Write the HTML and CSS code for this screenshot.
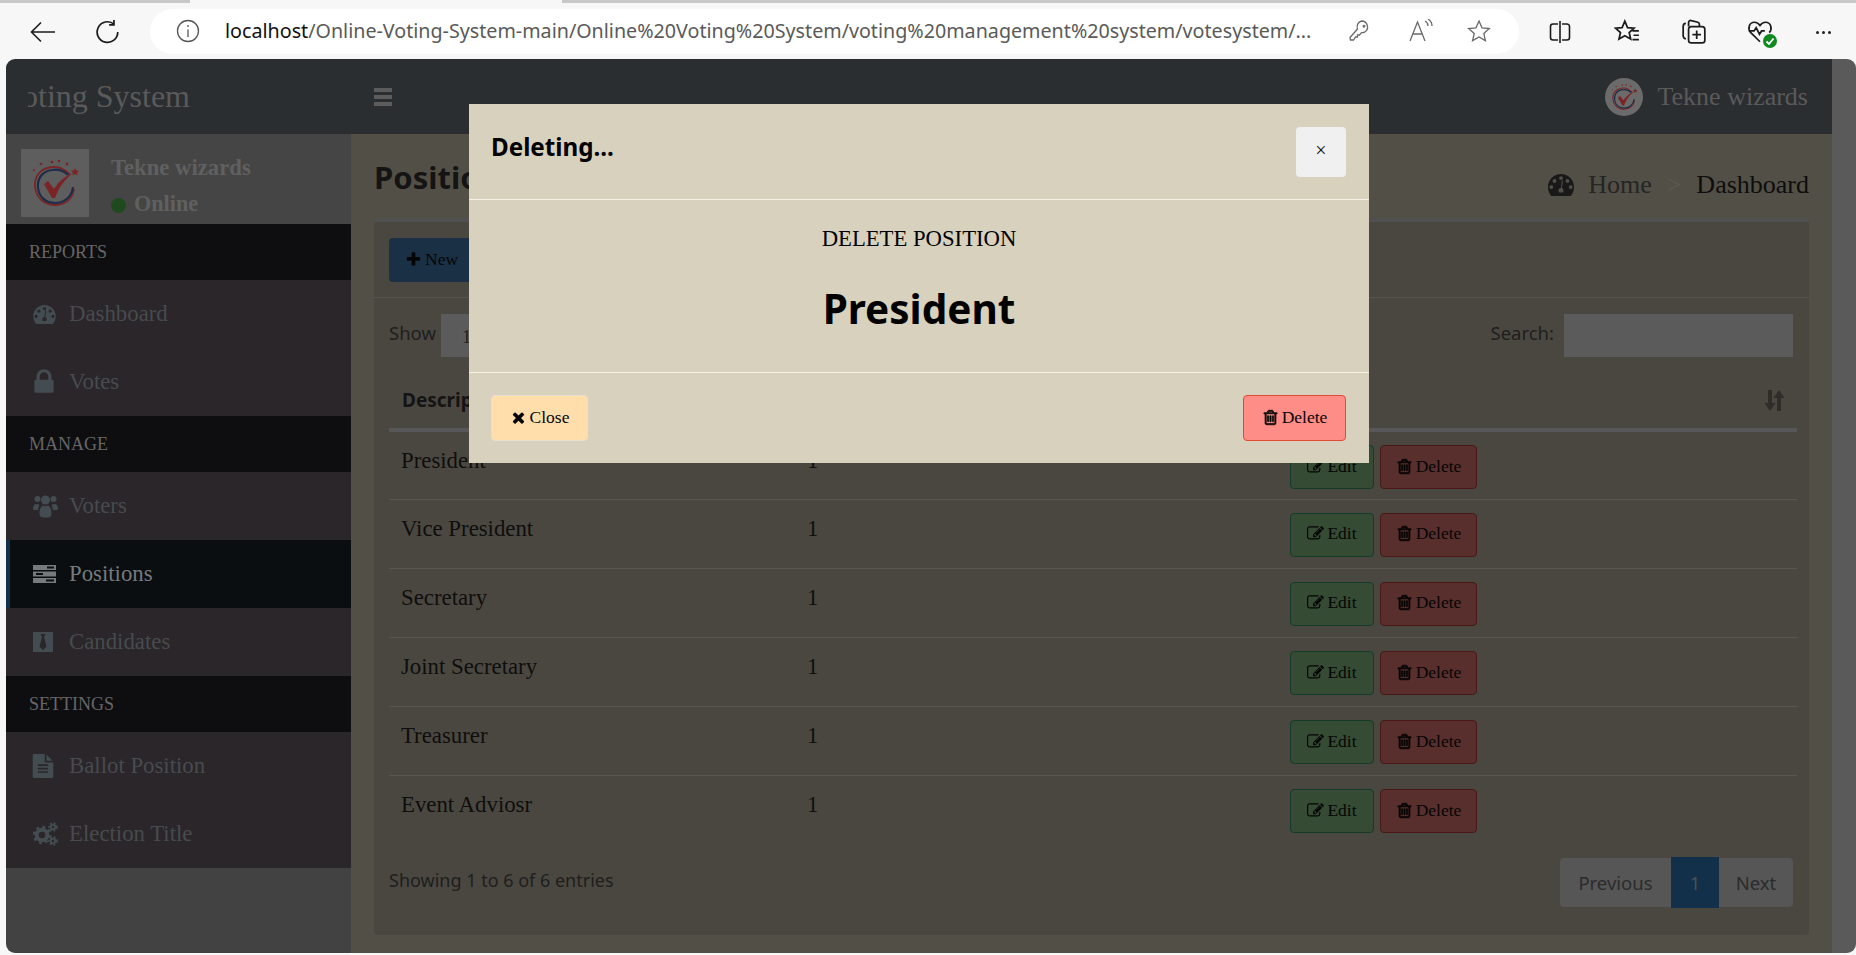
FILE: index.html
```html
<!DOCTYPE html>
<html lang="en">
<head>
<meta charset="utf-8">
<title>Positions</title>
<link rel="stylesheet" href="styles.css">
</head>
<body>
<svg class="sprite" xmlns="http://www.w3.org/2000/svg">
  <symbol id="i-trash" viewBox="0 0 1792 1792"><path stroke="currentColor" stroke-width="70" d="M704 736v576q0 14-9 23t-23 9h-64q-14 0-23-9t-9-23v-576q0-14 9-23t23-9h64q14 0 23 9t9 23zm256 0v576q0 14-9 23t-23 9h-64q-14 0-23-9t-9-23v-576q0-14 9-23t23-9h64q14 0 23 9t9 23zm256 0v576q0 14-9 23t-23 9h-64q-14 0-23-9t-9-23v-576q0-14 9-23t23-9h64q14 0 23 9t9 23zm128 724v-948h-896v948q0 22 7 40.5t14.5 27 10.5 8.5h832q3 0 10.5-8.5t14.5-27 7-40.5zm-672-1076h448l-48-117q-7-9-17-11h-317q-10 2-17 11zm928 32v64q0 14-9 23t-23 9h-96v948q0 83-47 143.5t-113 60.5h-832q-66 0-113-58.5t-47-141.5v-952h-96q-14 0-23-9t-9-23v-64q0-14 9-23t23-9h309l70-167q15-37 54-63t79-26h320q40 0 79 26t54 63l70 167h309q14 0 23 9t9 23z"/></symbol>
  <symbol id="i-plus" viewBox="0 0 1792 1792"><path d="M1600 736v192q0 40-28 68t-68 28h-416v416q0 40-28 68t-68 28h-192q-40 0-68-28t-28-68v-416h-416q-40 0-68-28t-28-68v-192q0-40 28-68t68-28h416v-416q0-40 28-68t68-28h192q40 0 68 28t28 68v416h416q40 0 68 28t28 68z"/></symbol>
  <symbol id="i-times" viewBox="0 0 1792 1792"><path d="M1490 1322q0 40-28 68l-136 136q-28 28-68 28t-68-28l-294-294-294 294q-28 28-68 28t-68-28l-136-136q-28-28-28-68t28-68l294-294-294-294q-28-28-28-68t28-68l136-136q28-28 68-28t68 28l294 294 294-294q28-28 68-28t68 28l136 136q28 28 28 68t-28 68l-294 294 294 294q28 28 28 68z"/></symbol>
  <symbol id="i-lock" viewBox="0 0 1792 1792"><path d="M640 768h512v-192q0-106-75-181t-181-75-181 75-75 181v192zm832 96v576q0 40-28 68t-68 28h-960q-40 0-68-28t-28-68v-576q0-40 28-68t68-28h32v-192q0-184 132-316t316-132 316 132 132 316v192h32q40 0 68 28t28 68z"/></symbol>
  <symbol id="i-edit" viewBox="0 0 1792 1792"><path d="M888 1184l116-116-152-152-116 116v56h96v96h56zm440-720q-16-16-33 1l-350 350q-17 17-1 33t33-1l350-350q17-17 1-33zm80 594v190q0 119-84.5 203.5t-203.5 84.5h-832q-119 0-203.5-84.5t-84.5-203.5v-832q0-119 84.5-203.5t203.5-84.5h832q63 0 117 25 15 7 18 23 3 17-9 29l-49 49q-14 14-32 8-23-6-45-6h-832q-66 0-113 47t-47 113v832q0 66 47 113t113 47h832q66 0 113-47t47-113v-126q0-13 9-22l64-64q15-15 35-7t20 29zm-96-738l288 288-672 672h-288v-288zm444 132l-92 92-288-288 92-92q28-28 68-28t68 28l152 152q28 28 28 68t-28 68z"/></symbol>
  <symbol id="i-file" viewBox="0 0 1792 1792"><path d="M1596 476q14 14 28 36h-472v-472q22 14 36 28zm-476 164h544v1056q0 40-28 68t-68 28h-1344q-40 0-68-28t-28-68v-1600q0-40 28-68t68-28h800v544q0 40 28 68t68 28zm160 736v-64q0-14-9-23t-23-9h-704q-14 0-23 9t-9 23v64q0 14 9 23t23 9h704q14 0 23-9t9-23zm0-256v-64q0-14-9-23t-23-9h-704q-14 0-23 9t-9 23v64q0 14 9 23t23 9h704q14 0 23-9t9-23zm0-256v-64q0-14-9-23t-23-9h-704q-14 0-23 9t-9 23v64q0 14 9 23t23 9h704q14 0 23-9t9-23z"/></symbol>
  <symbol id="i-gauge" viewBox="0 0 26 22"><path fill-rule="evenodd" d="M13 0C5.800 0 0 5.800 0 13c0 3.300 1.100 6.300 3 8.700.4.200.8.300 1.200.300h17.600c.4 0 .8-.1 1.200-.3 1.900-2.400 3-5.400 3-8.700C26 5.800 20.200 0 13 0zM13 2.200a1.900 1.900 0 1 1 0 3.800 1.900 1.900 0 0 1 0-3.800zM6.500 5.100a1.900 1.900 0 1 1 0 3.800 1.900 1.900 0 0 1 0-3.800zM3.300 11.200a1.900 1.900 0 1 1 0 3.800 1.900 1.900 0 0 1 0-3.800zM19.500 5.100a1.900 1.900 0 1 1 0 3.800 1.900 1.900 0 0 1 0-3.800zM22.700 11.200a1.900 1.900 0 1 1 0 3.800 1.900 1.900 0 0 1 0-3.800zM14.900 6.800l-1 7.300c1 .4 1.700 1.300 1.700 2.500 0 .7-.3 1.400-.8 1.900H11.200c-.5-.5-.8-1.200-.8-1.900 0-1.400 1.100-2.500 2.500-2.600l1-7.400c.1-.6 1.100-.5 1 .2z"/></symbol>
  <symbol id="i-users" viewBox="0 0 25 24"><circle cx="4.500" cy="5" r="3"/><circle cx="20.500" cy="5" r="3"/><circle cx="12.500" cy="6" r="4.500"/><path d="M0 15c0-3 1-5 3.500-5 1 0 2 .6 3 1-.8 1.500-1.300 3-1.300 5H1.500C.5 16 0 15.800 0 15zM25 15c0-3-1-5-3.500-5-1 0-2 .6-3 1 .8 1.500 1.300 3 1.300 5h3.700c1 0 1.500-.2 1.500-1z"/><path d="M6.500 20c0-5 1.300-8 4-8.500.6.500 1.200.8 2 .8s1.400-.3 2-.8c2.700.5 4 3.500 4 8.500 0 2.500-1.500 3.500-3.500 3.500h-5c-2 0-3.500-1-3.500-3.500z"/></symbol>
  <symbol id="i-tasks" viewBox="0 0 23 18"><path fill-rule="evenodd" d="M0 0h23v5H0zM14 1.500v2h7v-2zM0 6.500h23v5H0zM3 8v2h7V8zM0 13h23v5H0zM13 14.500v2h8v-2z"/></symbol>
  <symbol id="i-tie" viewBox="0 0 20 20"><path fill-rule="evenodd" d="M0 0h20v20H0zM7.500 2l1.500 3-2.500 9.500L10 18l3.500-3.500L11 5l1.500-3z"/></symbol>
  <symbol id="i-cogs" viewBox="0 0 25 24">
    <circle cx="9" cy="13" r="5.300" fill="none" stroke="currentColor" stroke-width="4"/>
    <circle cx="9" cy="13" r="8" fill="none" stroke="currentColor" stroke-width="2.500" stroke-dasharray="3 3.300"/>
    <circle cx="20" cy="5" r="2.300" fill="none" stroke="currentColor" stroke-width="2"/>
    <circle cx="20" cy="5" r="4" fill="none" stroke="currentColor" stroke-width="1.600" stroke-dasharray="2 1.800"/>
    <circle cx="20" cy="19" r="2.300" fill="none" stroke="currentColor" stroke-width="2"/>
    <circle cx="20" cy="19" r="4" fill="none" stroke="currentColor" stroke-width="1.600" stroke-dasharray="2 1.800"/>
  </symbol>
  <symbol id="i-logo" viewBox="0 0 68 68">
    <g fill="#7a2426"><circle cx="31" cy="13" r="1.300"/><circle cx="38" cy="12" r="1.300"/><circle cx="20" cy="15" r="1.300"/><circle cx="46" cy="15" r="1.400"/><circle cx="13" cy="21" r="1"/><path d="M54 19l1.200 2.500 2.800.3-2 1.900.5 2.800-2.500-1.400-2.500 1.400.5-2.800-2-1.900 2.800-.3z"/></g>
    <path d="M49 26C44 20 38 17 31 18 20 19 13 27 14 38c1 10 9 18 20 18 11 0 18-7 19-16" fill="none" stroke="#7a2426" stroke-width="1.800"/>
    <path d="M47 26C43 22 37 20 31 21 21 22 16 30 17 39c1 9 8 15 17 15 9 0 17-6 18-16" fill="none" stroke="#1d2c48" stroke-width="2.200"/>
    <path d="M23 35l4-3 6 8C38 32 44 27 52 24 44 30 38 38 34 49h-3z" fill="#7a2426"/>
  </symbol>
  <symbol id="i-sort" viewBox="0 0 21 21"><path d="M4 0h4v13h3.500L6 21 .5 13H4zM13 8V21h4V8h3.500L15 0 9.500 8z"/></symbol>
</svg>

<div class="tabstrip"><span class="tab-gray tab-left"></span><span class="tab-active"></span><span class="tab-gray tab-right"></span></div>

<header class="toolbar">
  <svg class="tool tool-back" viewBox="0 0 26 22"><path d="M25 11H2M11 1.500 1.500 11l9.500 9.500"/></svg>
  <svg class="tool tool-reload" viewBox="0 0 24 24"><path d="M21 12a9.500 9.500 0 1 1-3.500-7.300M17.500 1v4.500H13" /></svg>
  <div class="address">
    <svg class="addr-info" viewBox="0 0 24 24"><circle cx="12" cy="12" r="10.500"/><path d="M12 10.500V18M12 6v2"/></svg>
    <div class="url"><span class="url-host">localhost</span>/Online-Voting-System-main/Online%20Voting%20System/voting%20management%20system/votesystem/...</div>
    <svg class="addr-icon addr-key" viewBox="0 0 24 24"><path d="M14.500 2a6 6 0 0 1 3 11.200c-1 .5-2 .6-3 .4l-2 2.400h-2v2h-2l-2 3H3.500l-.5-2.500 7.500-8.500a6 6 0 0 1 4-8zM17 6.500a.8.800 0 1 1-.01 0z"/></svg>
    <svg class="addr-icon addr-read" viewBox="0 0 26 24"><path d="M2 22 9.500 3l7.500 19M5 15h9M17 2c2 1 3 2.500 3 5M20 0c2.500 1.500 4 3.500 4 7"/></svg>
    <svg class="addr-icon addr-star" viewBox="0 0 24 24"><path d="M12 2l3 6.800 7.300.7-5.500 4.900 1.600 7.200L12 18l-6.400 3.600 1.600-7.200L1.700 9.500 9 8.800z"/></svg>
  </div>
  <svg class="tool tool-split" viewBox="0 0 24 24"><path d="M10 4H5a2.500 2.500 0 0 0-2.500 2.500v11A2.500 2.500 0 0 0 5 20h5M14 4h5a2.500 2.500 0 0 1 2.500 2.500v11A2.500 2.500 0 0 1 19 20h-5M12 1v22"/></svg>
  <svg class="tool tool-fav" viewBox="0 0 24 24"><path d="M10 2l2.500 6 6 .5-4.500 4 1.400 6L10 15.500 4.600 18.500 6 12.500l-4.500-4 6-.5zM17 11h6M18 15h5M17 19h6"/></svg>
  <svg class="tool tool-coll" viewBox="0 0 24 24"><path d="M7 7V3.500C7 2 8 1 9.500 1.500l6 1.500c1 .3 1.500 1 1.500 2v2M4.500 18.500c-1.500-.5-2.500-1.500-2.500-3V7c0-2 1-3 2.500-3"/><rect x="7" y="7" width="15" height="15" rx="2.500"/><path d="M14.500 10.500v8M10.500 14.500h8"/></svg>
  <span class="tool-heart">
    <svg class="tool" viewBox="0 0 24 24"><path d="M12 21 3.500 12.500C.5 9.500 1.500 3 7 3c2.500 0 4 1.500 5 3 1-1.500 2.500-3 5-3 5.500 0 6.500 6.500 3.500 9.500M1.500 11h5l2-3 3 6 2-3h3"/></svg>
    <span class="heart-badge"><svg viewBox="0 0 14 14"><path d="M3.500 7.500 6 10l4.500-5.500"/></svg></span>
  </span>
  <span class="tool-dots"><i></i><i></i><i></i></span>
</header>

<div class="page">
  <div class="app">
    <div class="topbar">
      <div class="brand"><span class="brand-clip"><span>Online Voting System</span></span></div>
      <div class="hamburger"><i></i><i></i><i></i></div>
      <div class="top-user">
        <span class="top-avatar"><svg><use href="#i-logo"/></svg></span>
        <span>Tekne wizards</span>
      </div>
    </div>
    <div class="workspace">
      <aside class="sidebar">
        <div class="user-panel">
          <span class="user-avatar"><svg><use href="#i-logo"/></svg></span>
          <div class="user-info">
            <div>Tekne wizards</div>
            <div class="user-status"><span class="status-dot"></span>Online</div>
          </div>
        </div>
        <div class="nav-head">REPORTS</div>
        <a class="nav-item"><svg class="nav-icon ni-gauge"><use href="#i-gauge"/></svg>Dashboard</a>
        <a class="nav-item"><svg class="nav-icon ni-lock"><use href="#i-lock"/></svg>Votes</a>
        <div class="nav-head">MANAGE</div>
        <a class="nav-item"><svg class="nav-icon ni-users"><use href="#i-users"/></svg>Voters</a>
        <a class="nav-item nav-active"><svg class="nav-icon ni-tasks"><use href="#i-tasks"/></svg>Positions</a>
        <a class="nav-item"><svg class="nav-icon ni-tie"><use href="#i-tie"/></svg>Candidates</a>
        <div class="nav-head">SETTINGS</div>
        <a class="nav-item"><svg class="nav-icon ni-file"><use href="#i-file"/></svg>Ballot Position</a>
        <a class="nav-item"><svg class="nav-icon ni-cogs"><use href="#i-cogs"/></svg>Election Title</a>
      </aside>
      <main class="content">
        <div class="content-head">
          <h1 class="page-title">Positions</h1>
          <div class="crumbs">
            <svg class="crumb-icon"><use href="#i-gauge"/></svg>
            <span class="crumb-home">Home</span>
            <span class="crumb-sep">&gt;</span>
            <span class="crumb-now">Dashboard</span>
          </div>
        </div>
        <section class="box">
          <div class="box-head">
            <button class="btn btn-new"><svg class="btn-icon"><use href="#i-plus"/></svg>New</button>
          </div>
          <div class="box-body">
            <div class="dt-top">
              <div class="dt-length">Show<span class="dt-select">10</span></div>
              <div class="dt-search">Search:<span class="dt-input"></span></div>
            </div>
            <table class="dt">
              <thead>
                <tr>
                  <th class="col-a">Description</th>
                  <th class="col-b">Maximum Vote</th>
                  <th class="col-c">Tools<svg class="sort-icon"><use href="#i-sort"/></svg></th>
                </tr>
              </thead>
              <tbody>
                <tr><td>President</td><td>1</td><td><div class="tools"><button class="btn btn-edit"><svg class="btn-icon"><use href="#i-edit"/></svg>Edit</button><button class="btn btn-del"><svg class="btn-icon"><use href="#i-trash"/></svg>Delete</button></div></td></tr>
                <tr><td>Vice President</td><td>1</td><td><div class="tools"><button class="btn btn-edit"><svg class="btn-icon"><use href="#i-edit"/></svg>Edit</button><button class="btn btn-del"><svg class="btn-icon"><use href="#i-trash"/></svg>Delete</button></div></td></tr>
                <tr><td>Secretary</td><td>1</td><td><div class="tools"><button class="btn btn-edit"><svg class="btn-icon"><use href="#i-edit"/></svg>Edit</button><button class="btn btn-del"><svg class="btn-icon"><use href="#i-trash"/></svg>Delete</button></div></td></tr>
                <tr><td>Joint Secretary</td><td>1</td><td><div class="tools"><button class="btn btn-edit"><svg class="btn-icon"><use href="#i-edit"/></svg>Edit</button><button class="btn btn-del"><svg class="btn-icon"><use href="#i-trash"/></svg>Delete</button></div></td></tr>
                <tr><td>Treasurer</td><td>1</td><td><div class="tools"><button class="btn btn-edit"><svg class="btn-icon"><use href="#i-edit"/></svg>Edit</button><button class="btn btn-del"><svg class="btn-icon"><use href="#i-trash"/></svg>Delete</button></div></td></tr>
                <tr><td>Event Adviosr</td><td>1</td><td><div class="tools"><button class="btn btn-edit"><svg class="btn-icon"><use href="#i-edit"/></svg>Edit</button><button class="btn btn-del"><svg class="btn-icon"><use href="#i-trash"/></svg>Delete</button></div></td></tr>
              </tbody>
            </table>
            <div class="dt-bottom">
              <div class="dt-info">Showing 1 to 6 of 6 entries</div>
              <div class="pager"><span class="pg pg-prev">Previous</span><span class="pg pg-cur">1</span><span class="pg pg-next">Next</span></div>
            </div>
          </div>
        </section>
      </main>
    </div>
  </div>
  <div class="scrollbar"></div>

  <div class="modal">
    <div class="modal-head">
      <h4 class="modal-title">Deleting...</h4>
      <button class="modal-x">×</button>
    </div>
    <div class="modal-body">
      <p class="modal-label">DELETE POSITION</p>
      <h2 class="modal-name">President</h2>
    </div>
    <div class="modal-foot">
      <button class="btn btn-close"><svg class="btn-icon btn-icon-x"><use href="#i-times"/></svg>Close</button>
      <button class="btn btn-confirm"><svg class="btn-icon"><use href="#i-trash"/></svg>Delete</button>
    </div>
  </div>
</div>
</body>
</html>
```
FILE: styles.css
```css
* { box-sizing: border-box; }
html, body { margin: 0; padding: 0; }
body {
  width: 1856px; height: 955px; overflow: hidden;
  background: #f7f7f7;
  font-family: "Liberation Serif", serif;
  color: #0d0d0d;
}
.sprite { position: absolute; width: 0; height: 0; }
svg { display: block; fill: currentColor; }

.tabstrip { display: flex; height: 3px; }
.tab-gray { background: #c8c8c8; }
.tab-left { width: 190px; }
.tab-active { width: 372px; background: #f7f7f7; }
.tab-right { flex: 1; }

.toolbar { display: flex; align-items: center; height: 56px; padding-top: 2px; }
.tool { fill: none; stroke: #1c1c1c; stroke-width: 1.6; }
.tool-back { width: 26px; height: 22px; margin-left: 30px; }
.tool-reload { width: 26px; height: 26px; margin-left: 39px; }
.address {
  display: flex; align-items: center;
  width: 1369px; height: 45px; margin-left: 29px; margin-top: -2px;
  background: #fff; border-radius: 23px;
}
.addr-info { width: 24px; height: 24px; margin-left: 26px; fill: none; stroke: #555; stroke-width: 1.3; }
.url {
  width: 1089px; margin-left: 25px;
  font: 19.700px/26px "Noto Sans", sans-serif; color: #5a5a5a; white-space: nowrap; overflow: hidden;
}
.url-host { color: #111; }
.addr-icon { fill: none; stroke: #6a6a6a; stroke-width: 1.3; width: 24px; height: 24px; }
.addr-key { margin-left: 33px; }
.addr-read { margin-left: 37px; width: 26px; }
.addr-star { margin-left: 33px; }
.tool-split { width: 24px; height: 24px; margin-left: 29px; }
.tool-fav { width: 26px; height: 26px; margin-left: 42px; }
.tool-coll { width: 26px; height: 26px; margin-left: 41px; }
.tool-heart { position: relative; width: 26px; height: 26px; margin-left: 40px; }
.tool-heart .tool { width: 26px; height: 26px; }
.heart-badge {
  position: absolute; right: -4px; bottom: -3px; width: 14px; height: 14px;
  border-radius: 50%; background: #0f8a1f;
}
.heart-badge svg { fill: none; stroke: #fff; stroke-width: 1.8; }
.tool-dots { display: flex; gap: 3px; margin-left: 43px; }
.tool-dots i { width: 3px; height: 3px; border-radius: 50%; background: #222; }

.page {
  position: relative; display: flex;
  height: 894px; margin-left: 6px;
  border-radius: 9px; overflow: hidden;
}
.app { display: flex; flex-direction: column; width: 1826px; }
.scrollbar { width: 24px; background: #5a5a5a; }

.topbar { display: flex; align-items: center; flex: 0 0 75px; background: #2b2e31; color: #5a5a5a; }
.brand { width: 345px; padding-left: 22px; }
.brand-clip { display: flex; justify-content: flex-end; width: 162px; overflow: hidden; white-space: nowrap; font-size: 32px; }
.hamburger { display: flex; flex-direction: column; gap: 3px; margin-left: 23px; width: 18px; }
.hamburger i { height: 4px; background: #5c5c5c; }
.top-user { display: flex; align-items: center; gap: 14px; margin-left: auto; padding-right: 24px; font-size: 26px; color: #5a5a5a; }
.top-avatar { width: 38px; height: 38px; border-radius: 50%; background: #6b6b6b; overflow: hidden; }
.top-avatar svg { width: 38px; height: 38px; }

.workspace { display: flex; flex: 1; min-height: 0; }
.sidebar { display: flex; flex-direction: column; width: 345px; background: #424242; }
.user-panel { display: flex; flex: 0 0 90px; padding: 15px 0 0 15px; background: #454545; }
.user-avatar { width: 68px; height: 68px; background: #5e5e5e; }
.user-avatar svg { width: 68px; height: 68px; }
.user-info { margin-left: 22px; font-size: 22.700px; font-weight: bold; color: #606060; line-height: 36px; margin-top: 1px; }
.user-status { display: flex; align-items: center; font-size: 22.200px; }
.status-dot { width: 15px; height: 15px; border-radius: 50%; background: #1f4a1e; margin: 2px 8px 0 0; }
.nav-head { display: flex; align-items: center; height: 56px; padding-left: 23px; background: #0e0e10; color: #666; font-size: 18px; }
.nav-item { display: flex; align-items: center; height: 68px; padding-left: 27px; background: #2b262a; color: #474b4e; font-size: 22.800px; }
.nav-active { background: #0a0e10; border-left: 4px solid #11304a; padding-left: 23px; color: #767a7c; }
.nav-icon { flex: none; margin-right: 13px; color: #434c50; }
.nav-active .nav-icon { color: #767a7c; }
.ni-gauge { width: 23px; height: 19px; }
.ni-lock { width: 30px; height: 30px; margin-right: 10px; margin-left: -4px; }
.ni-users { width: 25px; height: 24px; margin-right: 11px; }
.ni-tasks { width: 23px; height: 18px; }
.ni-tie { width: 20px; height: 20px; margin-right: 16px; }
.ni-file { width: 24px; height: 24px; margin-right: 14px; margin-left: -2px; }
.ni-cogs { width: 25px; height: 24px; margin-right: 11px; }

.content { flex: 1; padding: 0 23px; background: #524f46; }
.content-head { display: flex; align-items: flex-start; justify-content: space-between; height: 85px; }
.page-title { margin: 20px 0 0; font: bold 31px/46px "Noto Sans", sans-serif; color: #141414; }
.crumbs { display: flex; align-items: center; margin-top: 36px; font-size: 26px; line-height: 30px; }
.crumb-icon { width: 26px; height: 22px; color: #191919; }
.crumb-home { margin-left: 14px; color: #252525; }
.crumb-sep { margin: 0 15px; color: #5d5a52; }
.crumb-now { color: #0d0d0d; }

.box { height: 716px; background: #4a4740; border-top: 3px solid #4f5052; border-radius: 4px; }
.box-head { height: 76px; padding: 16px 15px 0; border-bottom: 1px solid #57544c; }
.btn {
  display: inline-flex; align-items: center; justify-content: center;
  height: 44px; padding: 0 0 2px; border: 1px solid transparent; border-radius: 4px;
  font: 17.500px "Liberation Serif", serif; color: #050505;
}
.btn-icon { width: 17px; height: 17px; margin-right: 3px; flex: none; }
.btn-new { width: 100px; background: #1a3045; justify-content: flex-start; padding-left: 15px; }
.box-body { padding: 16px 12px 0 15px; }
.dt-top { display: flex; justify-content: space-between; padding-right: 4px; height: 44px; font: 18.500px/38px "Noto Sans", sans-serif; color: #1e1e1e; }
.dt-length, .dt-search { display: flex; align-items: flex-start; }
.dt-select { display: block; width: 120px; height: 43px; margin-left: 5px; padding: 4px 21px; background: #5b5b5b; font-family: "Liberation Serif", serif; }
.dt-input { display: block; width: 229px; height: 43px; margin-left: 10px; background: #5b5b5b; }

.dt { width: 1408px; border-collapse: collapse; table-layout: fixed; }
.dt th { height: 72px; padding: 14px 13px 0; border-bottom: 4px solid #57575a; font: bold 19px "Noto Sans", sans-serif; text-align: left; color: #141414; position: relative; }
.col-a { width: 406px; }
.col-b { width: 483px; }
.dt td { height: 69.200px; padding: 13px 12px 0; vertical-align: top; font-size: 22.800px; line-height: 32px; color: #0e0e0e; border-bottom: 1px solid #58574f; }
.dt tr:last-child td { border-bottom: 0; }
.tools { display: flex; gap: 6px; }
.sort-icon { position: absolute; right: 12px; top: 32px; width: 21px; height: 21px; color: #2e2d29; }
.btn-edit { width: 84px; background: #354b34; border-color: #143b2a; }
.btn-del { width: 97px; background: #582f2d; border-color: #4a1815; }

.dt-bottom { display: flex; justify-content: space-between; padding: 13px 4px 0 0; }
.dt-info { font: 18px/44px "Noto Sans", sans-serif; color: #1e1e1e; }
.pager { display: flex; height: 49px; font: 18.500px "Noto Sans", sans-serif; color: #2b2b2b; background: #565657; border-radius: 4px; }
.pg { display: flex; align-items: center; justify-content: center; }
.pg-prev { width: 111px; }
.pg-cur { width: 48px; margin: -1px 0; background: #123049; color: #47515a; }
.pg-next { width: 74px; }

.modal { position: absolute; left: 463px; top: 45px; width: 900px; height: 359px; background: #d8d1bd; }
.modal-head { display: flex; justify-content: space-between; height: 96px; padding: 23px 23px 0 22px; border-bottom: 1px solid #f5f2ea; }
.modal-title { margin: 0; font: bold 24.200px/40px "Noto Sans", sans-serif; color: #000; }
.modal-x { width: 50px; height: 50px; padding: 0 0 4px; border: 0; border-radius: 4px; background: #f0f0f0; font: 20px "Liberation Serif", serif; color: #111; }
.modal-body { height: 173px; border-bottom: 1px solid #f5f2ea; text-align: center; }
.modal-label { margin: 0; padding-top: 25px; font-size: 22.700px; line-height: 28px; color: #000; }
.modal-name { margin: 26px 0 0; font: bold 40.500px/60px "Noto Sans", sans-serif; color: #000; }
.modal-foot { display: flex; justify-content: space-between; padding: 22px 23px 0 22px; }
.modal-foot .btn { height: 46px; }
.btn-close { width: 97px; background: #ffdeab; border-color: #e6e0d0; }
.btn-confirm { width: 103px; background: #ff8d87; border-color: #e04b35; }
```
